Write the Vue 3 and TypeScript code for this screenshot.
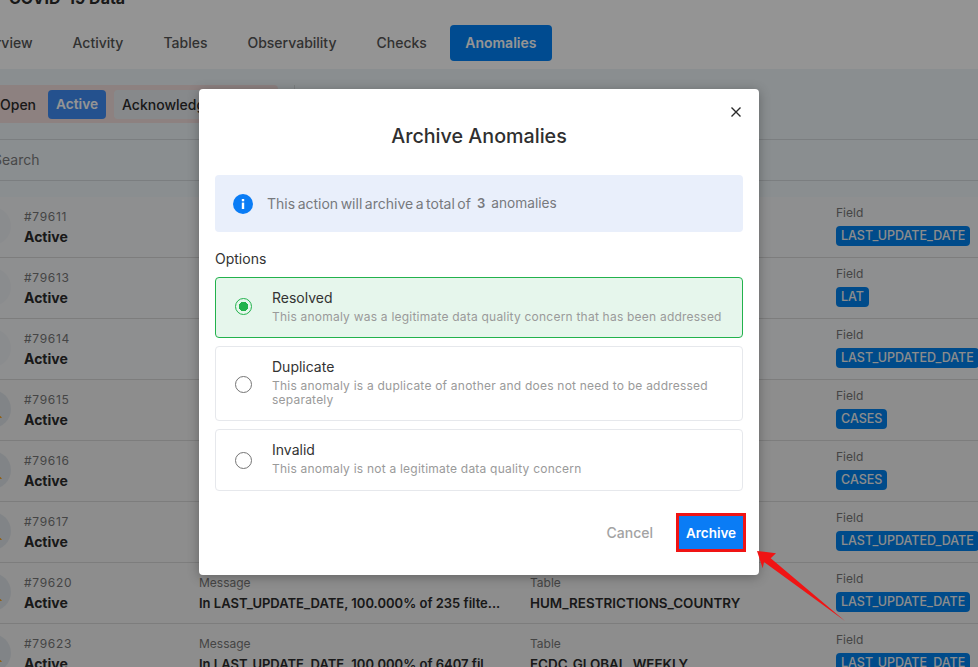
<script setup lang="ts">
interface Row {
  id: string
  field: string
  warn: boolean
  message?: string
  table?: string
}

const tabs = ['Overview', 'Activity', 'Tables', 'Observability', 'Checks', 'Anomalies']

const rows: Row[] = [
  { id: '#79611', field: 'LAST_UPDATE_DATE', warn: false },
  { id: '#79613', field: 'LAT', warn: false },
  { id: '#79614', field: 'LAST_UPDATED_DATE', warn: false },
  { id: '#79615', field: 'CASES', warn: true },
  { id: '#79616', field: 'CASES', warn: true },
  { id: '#79617', field: 'LAST_UPDATED_DATE', warn: true },
  {
    id: '#79620',
    field: 'LAST_UPDATE_DATE',
    warn: true,
    message: 'In LAST_UPDATE_DATE, 100.000% of 235 filte...',
    table: 'HUM_RESTRICTIONS_COUNTRY',
  },
  {
    id: '#79623',
    field: 'LAST_UPDATE_DATE',
    warn: true,
    message: 'In LAST_UPDATE_DATE, 100.000% of 6407 fil...',
    table: 'ECDC_GLOBAL_WEEKLY',
  },
]

const options = [
  {
    title: 'Resolved',
    text: 'This anomaly was a legitimate data quality concern that has been addressed',
    selected: true,
  },
  {
    title: 'Duplicate',
    text: 'This anomaly is a duplicate of another and does not need to be addressed separately',
    selected: false,
  },
  {
    title: 'Invalid',
    text: 'This anomaly is not a legitimate data quality concern',
    selected: false,
  },
]
</script>

<template>
  <div class="page">
    <header class="head">
      <h2 class="head__title">COVID-19 Data</h2>
      <nav class="tabs">
        <span v-for="tab in tabs" :key="tab" class="tab" :class="{ 'tab--on': tab === 'Anomalies' }">{{ tab }}</span>
      </nav>
    </header>

    <section class="body">
      <div class="filters">
        <div class="status">
          <span class="status__item">Open</span>
          <span class="status__item status__item--on">Active</span>
          <span class="status__item status__item--ack">Acknowledged</span>
        </div>
        <span class="filters__rule" />
      </div>
      <div class="search">Search</div>

      <div v-for="row in rows" :key="row.id" class="row" :class="{ 'row--warn': row.warn }">
        <div class="row__icon">
          <span v-if="row.warn" class="row__warn" />
        </div>
        <div class="row__id">
          <span class="row__num">{{ row.id }}</span>
          <strong class="row__val">Active</strong>
        </div>
        <div class="row__msg">
          <template v-if="row.message">
            <span class="row__label">Message</span>
            <strong class="row__val row__val--msg">{{ row.message }}</strong>
          </template>
        </div>
        <div class="row__table">
          <template v-if="row.table">
            <span class="row__label">Table</span>
            <strong class="row__val row__val--table">{{ row.table }}</strong>
          </template>
        </div>
        <div class="row__field">
          <span class="row__label">Field</span>
          <span class="chip">{{ row.field }}</span>
        </div>
      </div>
    </section>

    <div class="overlay" />

    <div class="modal">
      <button class="modal__close" aria-label="Close">
        <svg width="12" height="12" viewBox="0 0 12 12" fill="none" stroke="#2a2a2a" stroke-width="1.4">
          <path d="M1.5 1.5l9 9M10.5 1.5l-9 9" />
        </svg>
      </button>
      <h1 class="modal__title">Archive Anomalies</h1>

      <div class="notice">
        <svg width="20" height="20" viewBox="0 0 20 20">
          <circle cx="10" cy="10" r="10" fill="#0a7cf5" />
          <rect x="8.8" y="8.6" width="2.4" height="6.4" fill="#fff" />
          <rect x="8.8" y="5" width="2.4" height="2.3" fill="#fff" />
        </svg>
        <div class="notice__copy">
          <span class="notice__lead">This action will archive a total of</span>
          <b class="notice__count">3</b>
          <span class="notice__tail">anomalies</span>
        </div>
      </div>

      <div class="options-label">Options</div>
      <div class="options">
        <div v-for="opt in options" :key="opt.title" class="option" :class="{ 'option--on': opt.selected }">
          <span class="radio" :class="{ 'radio--on': opt.selected }" />
          <div class="option__copy">
            <div class="option__title">{{ opt.title }}</div>
            <div class="option__text">{{ opt.text }}</div>
          </div>
        </div>
      </div>

      <div class="modal__actions">
        <span class="cancel">Cancel</span>
        <button class="archive">Archive</button>
      </div>
    </div>

    <svg class="arrow" width="100" height="90" viewBox="0 0 100 90">
      <path d="M7 11L26 13.3L20.7 18.3L95 81L14 22L12.7 28.3Z" fill="#f01414" />
    </svg>
  </div>
</template>

<style>
html,
body {
  margin: 0;
  overflow: hidden;
}
</style>

<style scoped>
.page {
  position: relative;
  width: 978px;
  height: 667px;
  overflow: hidden;
  background: #fff;
  font-family: Inter, "Noto Sans", sans-serif;
  color: #2b2b2b;
}

.head {
  display: flow-root;
  height: 69px;
  background: #fff;
}

.head__title {
  margin: -14px 0 0;
  padding-left: 9px;
  height: 25px;
  font-size: 16px;
  line-height: 25px;
  font-weight: 700;
}

.tabs {
  display: flex;
  align-items: center;
  margin-left: -51px;
  margin-top: 14px;
}

.tab {
  padding: 0 20px;
  height: 36px;
  line-height: 36px;
  border-radius: 4px;
  font-size: 14px;
  font-weight: 500;
  color: #555;
}

.tab--on {
  margin-left: 3px;
  width: 102px;
  padding: 0;
  text-align: center;
  background: #0082f8;
  color: #fff;
  font-weight: 600;
}

.body {
  background: #eef4f9;
}

.filters {
  display: flex;
  align-items: flex-start;
  height: 70px;
  padding-top: 16px;
  box-sizing: border-box;
}

.status {
  display: flex;
  align-items: center;
  gap: 8px;
  width: 286px;
  height: 38px;
  margin-left: -8px;
  padding-left: 8px;
  box-sizing: border-box;
  border-radius: 4px;
  background: #f3dedd;
  overflow: hidden;
  font-size: 14px;
  font-weight: 500;
}

.status__item {
  padding: 0 4px 0 0;
  color: #2b2b2b;
}

.status__item--on {
  width: 58px;
  height: 29px;
  line-height: 29px;
  padding: 0;
  text-align: center;
  border-radius: 4px;
  background: #3f8cf5;
  color: #fff;
  font-size: 13.7px;
  font-weight: 600;
}

.status__item--ack {
  height: 29px;
  line-height: 29px;
  padding: 0 8px;
  border-radius: 4px;
  background: #e9edf0;
}

.filters__rule {
  width: 1px;
  height: 38px;
  margin-left: 16px;
  background: #d8dcdf;
}

.search {
  height: 42px;
  margin-left: -7px;
  box-sizing: border-box;
  border-top: 1px solid #d5d9dc;
  border-bottom: 1px solid #d5d9dc;
  line-height: 40px;
  font-size: 14px;
  color: #7d7d7d;
}

.row {
  display: grid;
  grid-template-columns: 24px 175px 331px 306px 1fr;
  height: 61px;
  box-sizing: border-box;
  border-bottom: 1px solid #d8d8d8;
  background: #f4f6f8;
}

.row--warn {
  background: #f3f3f3;
}

.search + .row {
  margin-top: 16px;
}

.row__icon {
  position: relative;
}

.row__icon::before {
  content: "";
  position: absolute;
  left: -27px;
  top: 10px;
  width: 38px;
  height: 38px;
  border-radius: 50%;
  background: #eef1f4;
}

.row--warn .row__icon::before {
  background: #dfe4e9;
}

.row__warn {
  position: absolute;
  left: -4px;
  top: 34px;
  width: 0;
  height: 0;
  border-left: 3px solid transparent;
  border-right: 3px solid transparent;
  border-bottom: 4px solid #f4a62a;
}

.row__id,
.row__msg,
.row__table {
  display: flex;
  flex-direction: column;
  align-items: flex-start;
  padding-top: 12px;
  gap: 3px;
  min-width: 0;
}

.row__field {
  display: flex;
  flex-direction: column;
  align-items: flex-start;
  padding-top: 8px;
  gap: 5px;
}

.row__num,
.row__label {
  font-size: 12px;
  line-height: 16px;
  color: #777;
}

.row__num {
  letter-spacing: 0.7px;
}

.row__val {
  font-size: 14px;
  line-height: 18px;
  font-weight: 700;
  color: #2b2b2b;
  white-space: nowrap;
}

.row__val--msg {
  font-size: 13px;
  font-weight: 600;
}

.row__val--table {
  font-size: 13.4px;
  font-weight: 600;
}

.chip {
  height: 20px;
  line-height: 20px;
  padding: 0 5px;
  border-radius: 4px;
  background: #0082ee;
  color: #f2f2f2;
  font-size: 12.5px;
  font-weight: 500;
  white-space: nowrap;
}

.overlay {
  position: absolute;
  inset: 0;
  background: rgba(0, 0, 0, 0.42);
}

.modal {
  position: absolute;
  left: 199px;
  top: 89px;
  width: 560px;
  height: 486px;
  padding: 0 16px;
  box-sizing: border-box;
  border-radius: 4px;
  background: #fff;
  box-shadow: 0 2px 12px rgba(0, 0, 0, 0.3);
}

.modal__close {
  position: absolute;
  top: 17px;
  right: 17px;
  width: 12px;
  height: 12px;
  padding: 0;
  border: 0;
  background: none;
  line-height: 0;
}

.modal__title {
  margin: 0;
  padding-top: 33px;
  text-align: center;
  font-size: 19.7px;
  line-height: 28px;
  font-weight: 500;
  color: #2f2f2f;
}

.notice {
  display: flex;
  align-items: center;
  gap: 14px;
  height: 57px;
  margin-top: 25px;
  padding-left: 18px;
  border-radius: 4px;
  background: #e9effb;
  font-size: 14px;
  color: #77797d;
}

.notice__copy {
  display: flex;
  gap: 6px;
}

.notice__lead {
  word-spacing: -1.4px;
}

.notice__count {
  font-size: 13px;
  font-weight: 600;
}

.notice__tail {
  font-size: 13.7px;
}

.options-label {
  margin-top: 18px;
  font-size: 14px;
  line-height: 18px;
  font-weight: 400;
  color: #333;
}

.options {
  display: flex;
  flex-direction: column;
  gap: 8px;
  margin-top: 9px;
}

.option {
  display: flex;
  align-items: center;
  gap: 20px;
  padding: 11px 20px 13px 19px;
  border: 1px solid #e6e8ec;
  border-radius: 4px;
}

.option:last-child {
  padding-bottom: 14px;
}

.option--on {
  border-color: #22b24c;
  background: #e6f6ec;
}

.radio {
  flex: none;
  width: 15px;
  height: 15px;
  margin-top: 3px;
  border: 1.5px solid #757575;
  border-radius: 50%;
  box-sizing: content-box;
}

.radio--on {
  margin-top: 0;
  border-color: #22b24c;
  background: radial-gradient(circle, #22b24c 0 4.5px, transparent 5px);
}

.option__title {
  font-size: 14px;
  line-height: 17px;
  font-weight: 400;
  color: #333;
}

.option__text {
  margin-top: 4px;
  font-size: 12px;
  line-height: 14px;
  letter-spacing: 0.22px;
  color: #9a9a9a;
}

.modal__actions {
  display: flex;
  justify-content: flex-end;
  align-items: center;
  gap: 23px;
  margin-top: 22px;
  margin-right: -3px;
}

.cancel {
  font-size: 14px;
  font-weight: 500;
  color: #a3a3a3;
}

.archive {
  width: 70px;
  height: 39px;
  padding: 0;
  box-sizing: border-box;
  border: 3px solid #f01414;
  background: #0a7cf5;
  color: #fff;
  font: 600 13.5px Inter, sans-serif;
}

.arrow {
  position: absolute;
  left: 750px;
  top: 540px;
}
</style>
